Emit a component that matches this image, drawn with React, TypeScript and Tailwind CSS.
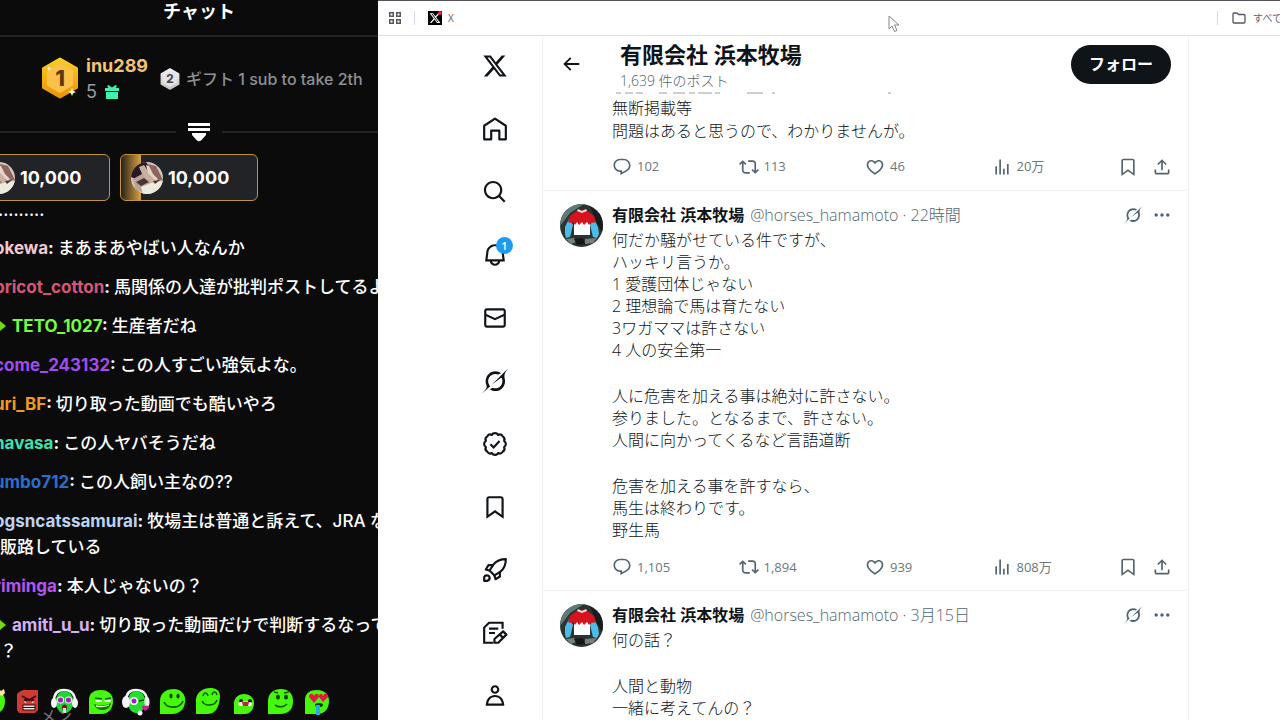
import React from "react";

const PATHS = {
  reply:
    "M1.751 10c0-4.42 3.584-8 8.005-8h4.366c4.49 0 8.129 3.64 8.129 8.13 0 2.96-1.607 5.68-4.196 7.11l-8.054 4.46v-3.69h-.067c-4.49.1-8.183-3.51-8.183-8.01zm8.005-6c-3.317 0-6.005 2.69-6.005 6 0 3.37 2.77 6.08 6.138 6.01l.351-.01h1.761v2.3l5.087-2.81c1.951-1.08 3.163-3.13 3.163-5.36 0-3.39-2.744-6.13-6.129-6.13H9.756z",
  repost:
    "M4.5 3.88l4.432 4.14-1.364 1.46L5.5 7.55V16c0 1.1.896 2 2 2H13v2H7.5c-2.209 0-4-1.79-4-4V7.55L1.432 9.48.068 8.02 4.5 3.88zM16.5 6H11V4h5.5c2.209 0 4 1.79 4 4v8.45l2.068-1.93 1.364 1.46-4.432 4.14-4.432-4.14 1.364-1.46 2.068 1.93V8c0-1.1-.896-2-2-2z",
  like: "M16.697 5.5c-1.222-.06-2.679.51-3.89 2.16l-.805 1.09-.806-1.09C9.984 6.01 8.526 5.44 7.304 5.5c-1.243.07-2.349.78-2.91 1.91-.552 1.12-.633 2.78.479 4.82 1.074 1.97 3.257 4.27 7.129 6.61 3.87-2.34 6.052-4.64 7.126-6.61 1.111-2.04 1.03-3.7.477-4.82-.561-1.13-1.666-1.84-2.908-1.91zm4.187 7.69c-1.351 2.48-4.001 5.12-8.379 7.67l-.503.3-.504-.3c-4.379-2.55-7.029-5.19-8.382-7.67-1.36-2.5-1.41-4.86-.514-6.67.887-1.79 2.647-2.91 4.601-3.01 1.651-.09 3.368.56 4.798 2.01 1.429-1.45 3.146-2.1 4.796-2.01 1.954.1 3.714 1.22 4.601 3.01.896 1.81.846 4.17-.514 6.67z",
  views: "M8.75 21V3h2v18h-2zM18 21V8.5h2V21h-2zM4 21l.004-10h2L6 21H4zm9.248 0v-7h2v7h-2z",
  bookmark:
    "M4 4.5C4 3.12 5.119 2 6.5 2h11C18.881 2 20 3.12 20 4.5v18.44l-8-5.71-8 5.71V4.5zM6.5 4c-.276 0-.5.22-.5.5v14.56l6-4.29 6 4.29V4.5c0-.28-.224-.5-.5-.5h-11z",
  share:
    "M12 2.59l5.7 5.7-1.41 1.42L13 6.41V16h-2V6.41l-3.3 3.3-1.41-1.42L12 2.59zM21 15l-.02 3.51c0 1.38-1.12 2.49-2.5 2.49H5.5C4.11 21 3 19.88 3 18.5V15h2v3.5c0 .28.22.5.5.5h12.98c.28 0 .5-.22.5-.5L19 15h2z",
  more: "M3 12c0-1.1.9-2 2-2s2 .9 2 2-.9 2-2 2-2-.9-2-2zm9 2c1.1 0 2-.9 2-2s-.9-2-2-2-2 .9-2 2 .9 2 2 2zm7 0c1.1 0 2-.9 2-2s-.9-2-2-2-2 .9-2 2 .9 2 2 2z",
  back: "M7.414 13l5.043 5.04-1.414 1.42L3.586 12l7.457-7.46 1.414 1.42L7.414 11H21v2H7.414z",
  x: "M18.244 2.25h3.308l-7.227 8.26 8.502 11.24H16.17l-5.214-6.817L4.99 21.75H1.68l7.73-8.835L1.254 2.25H8.08l4.713 6.231zm-1.161 17.52h1.833L7.084 4.126H5.117z",
  search:
    "M10.25 3.75c-3.59 0-6.5 2.91-6.5 6.5s2.91 6.5 6.5 6.5c1.795 0 3.419-.726 4.596-1.904 1.178-1.177 1.904-2.801 1.904-4.596 0-3.59-2.91-6.5-6.5-6.5zm-8.5 6.5c0-4.694 3.806-8.5 8.5-8.5s8.5 3.806 8.5 8.5c0 1.986-.682 3.815-1.824 5.262l4.781 4.781-1.414 1.414-4.781-4.781c-1.447 1.142-3.276 1.824-5.262 1.824-4.694 0-8.5-3.806-8.5-8.5z",
  bell: "M19.993 9.042C19.48 5.017 16.054 2 11.996 2s-7.49 3.021-7.999 7.051L2.866 18H7.1c.463 2.282 2.481 4 4.9 4s4.437-1.718 4.9-4h4.236l-1.143-8.958zM12 20c-1.306 0-2.417-.835-2.829-2h5.658c-.412 1.165-1.523 2-2.829 2zm-6.866-4l.847-6.698C6.364 6.272 8.941 4 11.996 4s5.627 2.268 6.013 5.295L18.864 16H5.134z",
  mail: "M1.998 5.5c0-1.381 1.119-2.5 2.5-2.5h15c1.381 0 2.5 1.119 2.5 2.5v13c0 1.381-1.119 2.5-2.5 2.5h-15c-1.381 0-2.5-1.119-2.5-2.5v-13zm2.5-.5c-.276 0-.5.224-.5.5v2.764l8 3.638 8-3.636V5.5c0-.276-.224-.5-.5-.5h-15zm15.5 5.463l-8 3.636-8-3.638V18.5c0 .276.224.5.5.5h15c.276 0 .5-.224.5-.5v-8.037z",
  person:
    "M5.651 19h12.698c-.337-1.8-1.023-3.21-1.945-4.19C15.318 13.65 13.838 13 12 13s-3.317.65-4.404 1.81c-.922.98-1.608 2.39-1.945 4.19zm.486-5.56C7.627 11.85 9.648 11 12 11s4.373.85 5.863 2.44c1.477 1.58 2.366 3.8 2.632 6.46l.11 1.1H3.395l.11-1.1c.266-2.66 1.155-4.88 2.632-6.46zM12 4c-1.105 0-2 .9-2 2s.895 2 2 2 2-.9 2-2-.895-2-2-2zM8 6c0-2.21 1.791-4 4-4s4 1.79 4 4-1.791 4-4 4-4-1.79-4-4z",
};

function Icon({ name, className }: { name: keyof typeof PATHS; className: string }) {
  return (
    <svg viewBox="0 0 24 24" fill="currentColor" className={className} aria-hidden="true">
      <path d={PATHS[name]} />
    </svg>
  );
}

function LineIcon({ children }: { children: React.ReactNode }) {
  return (
    <svg viewBox="0 0 24 24" fill="none" stroke="currentColor" strokeWidth="2" className="size-[26px]" aria-hidden="true">
      {children}
    </svg>
  );
}

function GrokIcon({ className }: { className: string }) {
  return (
    <svg viewBox="0 0 33 32" fill="currentColor" className={className} aria-hidden="true">
      <path d="M12.745 20.54l10.97-8.19c.539-.4 1.307-.244 1.564.38 1.349 3.288.746 7.241-1.938 9.955-2.683 2.714-6.417 3.31-9.83 1.954l-3.728 1.745c5.347 3.697 11.84 2.782 15.898-1.324 3.219-3.255 4.216-7.692 3.284-11.693l.008.009c-1.351-5.878.332-8.227 3.782-13.031L33 0l-4.54 4.59v-.014L12.743 20.544m-2.263 1.987c-3.837-3.707-3.175-9.446.1-12.755 2.42-2.449 6.388-3.448 9.852-1.979l3.72-1.737c-.67-.49-1.53-1.017-2.515-1.387-4.455-1.854-9.789-.931-13.41 2.728-3.483 3.523-4.579 8.94-2.697 13.561 1.405 3.454-.899 5.898-3.22 8.364C1.49 30.2.666 31.074 0 32l10.478-9.466" />
    </svg>
  );
}

/* ---------- chat panel ---------- */

function HexBadge({ rank }: { rank: 1 | 2 }) {
  const gold = rank === 1;
  return (
    <svg viewBox="0 0 38 42" className={gold ? "h-[42px] w-[38px] shrink-0" : "h-[22px] w-5 shrink-0"} role="img" aria-label={`${rank}`}>
      <defs>
        <linearGradient id={gold ? "hexGold" : "hexSilver"} x1="0" y1="0" x2="0" y2="1">
          <stop offset="0" stopColor={gold ? "#f8ce22" : "#f2f2f2"} />
          <stop offset="1" stopColor={gold ? "#ee9208" : "#c4c4c6"} />
        </linearGradient>
      </defs>
      <path
        d="M19 2 35.500 11.500v19L19 40 2.500 30.500v-19z"
        fill={gold ? "url(#hexGold)" : "url(#hexSilver)"}
        stroke={gold ? "url(#hexGold)" : "url(#hexSilver)"}
        strokeWidth="3"
        strokeLinejoin="round"
      />
      <path d="M19 7 31 14v14L19 35 7 28V14z" fill={gold ? "#fbc14a" : "#e4e4e6"} stroke={gold ? "#fbc14a" : "#e4e4e6"} strokeWidth="2" strokeLinejoin="round" />
      <text x="19" y="29" textAnchor="middle" fontFamily="Inter, sans-serif" fontWeight="800" fontSize="22" fill={gold ? "#5c3a06" : "#4a4a4e"}>
        {rank}
      </text>
      {gold && <path d="M31 31l1.200 2.800L35 35l-2.800 1.200L31 39l-1.200-2.800L27 35l2.800-1.200zM8 9l.8 1.700 1.700.8-1.700.8L8 14l-.8-1.700-1.700-.8 1.700-.8z" fill="#fff3c4" />}
    </svg>
  );
}

function PetAvatar() {
  return (
    <svg viewBox="0 0 32 32" className="size-8 shrink-0 rounded-full" aria-hidden="true">
      <rect width="32" height="32" fill="#cfc8bb" />
      <path d="M0 0h15l6 9-9 3-5 6-7-3z" fill="#2a1922" />
      <path d="M2 17l9-5 12 9-6 9-12-1z" fill="#b9a596" />
      <path d="M8 5l5-2 6 9 7 7-5 3-9-8z" fill="#c9aea2" />
      <path d="M17 2l8 2 7 14-6 1-7-9z" fill="#8e6460" />
      <path d="M15 3l3 1 4 8 5 5-2 2-8-8z" fill="#e5d5c9" />
      <path d="M10 25l10-4 12-2v13H12z" fill="#ecebdc" />
      <path d="M5 20l8-4 5 4-8 4zM22 19l7-1-5 4z" fill="#4b3436" />
    </svg>
  );
}

function GiftCard({ progress }: { progress?: boolean }) {
  return (
    <button
      className={
        progress
          ? "flex h-[47px] w-[138px] shrink-0 items-center gap-[5px] rounded-md border border-[#c0933f] bg-[linear-gradient(to_right,#25221d_0,#d59b3c_19px,#d59b3c_20px,#222327_20px)] pl-2.5 text-[18px] font-bold text-white"
          : "flex h-[47px] w-[138px] shrink-0 items-center gap-[5px] rounded-md border border-[#c0933f] bg-[#222327] pl-2.5 text-[18px] font-bold text-white"
      }
    >
      <PetAvatar />
      10,000
    </button>
  );
}

const MESSAGES: { name: string; color: string; lines: string[]; arrow?: boolean }[] = [
  { name: "okewa", color: "text-[#f6c8cf]", lines: ["まあまあやばい人なんか"] },
  { name: "pricot_cotton", color: "text-[#d65678]", lines: ["馬関係の人達が批判ポストしてるよ"] },
  { name: "TETO_1027", color: "text-[#75fd46]", lines: ["生産者だね"], arrow: true },
  { name: "come_243132", color: "text-[#a04cf2]", lines: ["この人すごい強気よな。"] },
  { name: "uri_BF", color: "text-[#f39a1c]", lines: ["切り取った動画でも酷いやろ"] },
  { name: "navasa", color: "text-[#3ee0ae]", lines: ["この人ヤバそうだね"] },
  { name: "umbo712", color: "text-[#2a6fd0]", lines: ["この人飼い主なの??"] },
  { name: "ogsncatssamurai", color: "text-[#bcd3f2]", lines: ["牧場主は普通と訴えて、JRA な", "販路している"] },
  { name: "riminga", color: "text-[#b255f0]", lines: ["本人じゃないの？"] },
  { name: "amiti_u_u", color: "text-[#d6b0f7]", lines: ["切り取った動画だけで判断するなって", "？"], arrow: true },
];

const GREEN = "#46f80c";
const BLOB = "M3 26V12C3 5 8 2 15 2s12 4 12 11-4 13-12 13z";

function Emote({ children }: { children: React.ReactNode }) {
  return (
    <button className="size-7 shrink-0" aria-label="emote">
      <svg viewBox="0 0 28 28" className="size-7" aria-hidden="true">
        {children}
      </svg>
    </button>
  );
}

function Emotes() {
  return (
    <div className="-ml-[22px] flex gap-2">
      <Emote>
        <path d={BLOB} fill={GREEN} />
        <path d="M19 5l2-4 2 2 3-2 1 4-3 3z" fill="#ffe9a0" />
      </Emote>
      <Emote>
        <path d="M5 4l4-2h15v20l-3 3H5l-2-3V6z" fill="#cf3a32" />
        <path d="M8 8l7 4 7-4M10 12l3 1M17 13l3-1" stroke="#3a0a0a" strokeWidth="2" fill="none" />
        <path d="M10 13l3 1-2 1zM20 13l-3 1 2 1z" fill="#fff" />
        <rect x="9" y="17" width="12" height="5" fill="#e8e8e8" stroke="#3a0a0a" />
        <path d="M9 19.500h12" stroke="#3a0a0a" />
      </Emote>
      <Emote>
        <path d="M4 13C4 5 8 2 14 2s11 3 11 11" stroke="#f4f6f4" strokeWidth="2.500" fill="none" />
        <ellipse cx="14.500" cy="14" rx="9" ry="11" fill="#1fd52f" />
        <ellipse cx="4" cy="15" rx="3" ry="5" fill="#f6f6f6" />
        <ellipse cx="25" cy="15" rx="3" ry="5" fill="#f6f6f6" />
        <circle cx="10.500" cy="12" r="3.500" fill="#fff" />
        <circle cx="18.500" cy="12" r="3.500" fill="#fff" />
        <circle cx="10.500" cy="12" r="2.600" fill="#9b1fc0" />
        <circle cx="18.500" cy="12" r="2.600" fill="#9b1fc0" />
        <ellipse cx="14.500" cy="19.500" rx="2.500" ry="3" fill="#7a1232" />
        <path d="M13 20h3v5h-3z" fill="#e5dce0" />
      </Emote>
      <Emote>
        <path d={BLOB} fill={GREEN} />
        <path d="M9 10l7 1M19 11l6-1" stroke="#0e6a00" strokeWidth="1.500" />
        <path d="M9 12h7v2h-6zM18 12h7l-1 2h-5z" fill="#e8ffe0" />
        <path d="M8 16c5 2 12 2 17-1-1 5-4 7-8 7s-8-2-9-6z" fill="#0e7a00" />
        <path d="M10 18c4 1 9 1 13-1" stroke="#d6ffc8" strokeWidth="1.300" fill="none" />
      </Emote>
      <Emote>
        <path d="M4 13C4 5 8 2 14 2s11 3 11 11" stroke="#f4f6f4" strokeWidth="2.500" fill="none" />
        <ellipse cx="14.500" cy="14" rx="9" ry="11" fill="#22e02a" />
        <ellipse cx="4" cy="14" rx="4" ry="6" fill="#f6f6f6" />
        <ellipse cx="25" cy="14" rx="2.500" ry="5" fill="#f6f6f6" />
        <circle cx="12" cy="13" r="4" fill="#fff" />
        <circle cx="12" cy="13" r="2.500" fill="#9b1fc0" />
        <path d="M17 13l5-1" stroke="#084a08" strokeWidth="1.500" />
        <path d="M23 23l-3-3c0-3 2-3 3-1 1-2 4-2 4 1z" fill="#d81aa0" />
        <circle cx="18" cy="25" r="2.500" fill="#f6f6f6" />
      </Emote>
      <Emote>
        <path d="M2 26V13C2 5 8 1 16 1c6 0 10 4 11 9 1 9-4 16-13 16z" fill={GREEN} />
        <ellipse cx="13" cy="8" rx="1.600" ry="2.600" fill="#06400a" />
        <ellipse cx="20" cy="8" rx="1.600" ry="2.600" fill="#06400a" />
        <path d="M6 14c3 7 16 7 19-1" stroke="#0b5a08" strokeWidth="1.600" fill="none" />
      </Emote>
      <Emote>
        <path d="M2 26V11C3 4 9 0 16 0c6 0 10 2 10 9-1 11-5 17-13 17z" fill={GREEN} />
        <path d="M9 8c1-4 4-4 5 0M18 7c1-4 4-4 5 0M8 13c3 6 13 5 15-1" stroke="#0b5a08" strokeWidth="1.500" fill="none" />
      </Emote>
      <Emote>
        <path d="M4 26V14c1-5 5-8 10-8 6 0 10 4 10 9s-3 11-9 11z" fill={GREEN} />
        <circle cx="11" cy="13" r="2" fill="#111" />
        <circle cx="20" cy="13" r="2" fill="#111" />
        <path d="M8 15c4-2 10-2 14 0 0 3-2 4-3 3h-8c-2 0-3-1-3-3z" fill="#f4efe8" />
        <path d="M12 14h7l-1 4h-5z" fill="#b8263a" />
      </Emote>
      <Emote>
        <path d="M2 26V13C2 5 8 1 15 1s12 4 12 12-4 13-13 13z" fill={GREEN} />
        <path d="M8 4l4 1M18 5l5-1" stroke="#0b5a08" strokeWidth="1.500" />
        <ellipse cx="12" cy="9" rx="2" ry="2.600" fill="#06400a" />
        <ellipse cx="20" cy="9" rx="2" ry="2.600" fill="#06400a" />
        <path d="M9 17c4 3 9 2 12-1" stroke="#0b5a08" strokeWidth="1.600" fill="none" />
      </Emote>
      <Emote>
        <path d={BLOB} fill={GREEN} />
        <path d="M12 15L7 9c0-4 4-4 5-1 1-3 5-3 5 1zM21 14l-4-5c0-4 3-4 4-1 1-3 5-3 5 1z" fill="#e8163c" />
        <ellipse cx="17" cy="17" rx="4" ry="2" fill="#0a3c0a" />
        <path d="M14 17h4v10h-4z" fill="#28a8e8" />
      </Emote>
    </div>
  );
}

function ChatPanel() {
  return (
    <aside className="relative flex w-[378px] shrink-0 flex-col overflow-hidden bg-[#0b0b0c] font-['Inter','Noto_Sans_CJK_JP',sans-serif] text-white">
      <h2 className="flex h-[37px] shrink-0 items-start justify-center border-b-2 border-[#242426] pl-5 text-[18px] leading-6 font-bold">チャット</h2>

      <div className="flex h-[82px] shrink-0 items-center pl-[41px]">
        <HexBadge rank={1} />
        <div className="ml-[7px] pt-0.5 leading-[26px]">
          <div className="text-[18px] font-bold text-[#f5c373]">inu289</div>
          <div className="flex items-center gap-2 text-[18px] text-[#9a9ca2]">
            5
            <svg viewBox="0 0 14 14" className="size-3.5" fill="#3ef2b4" aria-hidden="true">
              <path d="M0 3h3.500L2 1l1.500-1L7 2.500 10.500 0 12 1l-1.500 2H14v3H0zM1 7h12v7H1z" />
            </svg>
          </div>
        </div>
        <div className="ml-3 flex items-center gap-1.5 pt-0.5 text-[16px] font-medium whitespace-nowrap text-[#8d9096]">
          <HexBadge rank={2} />
          ギフト 1 sub to take 2th
        </div>
      </div>

      <div className="mb-[9px] flex h-[26px] shrink-0 items-center gap-3">
        <span className="h-0.5 flex-1 bg-[#242426]" />
        <button aria-label="expand" className="text-white">
          <svg viewBox="0 0 22 20" className="h-5 w-[22px]" fill="currentColor" aria-hidden="true">
            <path d="M0 1h22v3H0zM0 6h22v3H0zM4 11h14v2l-5 5.500q-2 1.500-4 0L4 13z" />
          </svg>
        </button>
        <span className="h-0.5 w-[156px] bg-[#242426]" />
      </div>

      <div className="-ml-7 flex shrink-0 gap-2.5">
        <GiftCard />
        <GiftCard progress />
      </div>

      <div className="-ml-1.5 flex shrink-0 flex-col gap-[13px] text-[17px] leading-[26px] font-medium whitespace-nowrap">
        <p className="h-[21px] pl-1 leading-[18px]">.........</p>
        {MESSAGES.map((m) => (
          <div key={m.name} className={m.arrow ? "flex items-start gap-1 pl-1.5" : "flex items-start"}>
            {m.arrow && (
              <svg viewBox="0 0 8 26" className="h-[26px] w-2 shrink-0" fill="#6fdc14" aria-hidden="true">
                <path d="M0 8l6 5-6 5z" />
              </svg>
            )}
            <div className={m.arrow ? "" : "w-0 min-w-full"}>
              <p>
                <span className={m.color + " font-bold"}>{m.name}</span>
                <span className="font-bold">: </span>
                {m.lines[0]}
              </p>
              {m.lines[1] && <p className={m.arrow ? "-ml-3" : "pl-1.5"}>{m.lines[1]}</p>}
            </div>
          </div>
        ))}
      </div>

      <div className="mt-6 shrink-0">
        <Emotes />
      </div>
      <span className="absolute bottom-0 left-10 h-3.5 overflow-hidden text-base leading-5 text-[#77797f]">メン</span>
    </aside>
  );
}

/* ---------- browser ---------- */

function BookmarksBar() {
  return (
    <header className="flex h-9 shrink-0 items-center border-t border-b border-t-[#55535a] border-b-[#dcdddf] bg-white pl-2.5 text-[10px] text-[#5f6368]">
      <button aria-label="Tab groups">
        <svg viewBox="0 0 14 14" className="size-3.5" fill="none" stroke="#55585c" strokeWidth="1.500" aria-hidden="true">
          <path d="M1.750 1.750h3.500v3.500h-3.500zM8.750 1.750h3.500v3.500h-3.500zM1.750 8.750h3.500v3.500h-3.500zM8.750 8.750h3.500v3.500h-3.500z" />
        </svg>
      </button>
      <span className="ml-3 h-3.5 w-px bg-[#d3dbee]" />
      <a href="#x" className="ml-[13px] flex items-center gap-1.5">
        <span className="relative flex size-3.5 items-center justify-center bg-black text-white">
          <Icon name="x" className="size-3" />
          <span className="absolute top-0 right-0 size-1 rounded-full bg-[#f0204e]" />
        </span>
        X
      </a>
      <span className="ml-auto h-3.5 w-px bg-[#d3dbee]" />
      <button className="-mr-3 ml-3.5 flex shrink-0 items-center gap-[7px] whitespace-nowrap">
        <svg viewBox="0 0 14 12" className="h-3 w-3.5" fill="none" stroke="#55585c" strokeWidth="1.300" aria-hidden="true">
          <path d="M1 2q0-1 1-1h3l1.500 1.500H12q1 0 1 1V10q0 1-1 1H2q-1 0-1-1z" />
        </svg>
        すべての
      </button>
    </header>
  );
}

function NavRail() {
  const items: [string, React.ReactNode][] = [
    ["X", <Icon name="x" className="size-7" />],
    [
      "ホーム",
      <LineIcon>
        <path d="M2 21V8.500L12 2l10 6.500V21h-6v-8H8.500v8z" transform="translate(0 .5)" strokeLinejoin="round" />
      </LineIcon>,
    ],
    ["検索", <Icon name="search" className="size-[26px]" />],
    [
      "通知",
      <span className="relative block">
        <Icon name="bell" className="size-[26px]" />
        <span className="absolute -top-[5px] -right-[5px] flex size-[17px] items-center justify-center rounded-full bg-[#1d9bf0] text-[11px] leading-none font-semibold text-white">1</span>
      </span>,
    ],
    ["メッセージ", <Icon name="mail" className="size-[26px]" />],
    ["Grok", <GrokIcon className="size-[26px]" />],
    [
      "認証",
      <LineIcon>
        <path
          d="M12 2a3.300 3.300 0 0 1 2.900 1.600 3.300 3.300 0 0 1 4.200 1.300 3.300 3.300 0 0 1 1.300 4.200A3.300 3.300 0 0 1 22 12a3.300 3.300 0 0 1-1.600 2.900 3.300 3.300 0 0 1-1.300 4.200 3.300 3.300 0 0 1-4.200 1.300A3.300 3.300 0 0 1 12 22a3.300 3.300 0 0 1-2.900-1.600 3.300 3.300 0 0 1-4.200-1.300 3.300 3.300 0 0 1-1.300-4.200A3.300 3.300 0 0 1 2 12a3.300 3.300 0 0 1 1.600-2.900 3.300 3.300 0 0 1 1.300-4.200 3.300 3.300 0 0 1 4.200-1.300A3.300 3.300 0 0 1 12 2z"
          strokeLinejoin="round"
        />
        <path d="M7.800 12.300l2.900 2.900 5.500-6" />
      </LineIcon>,
    ],
    ["ブックマーク", <Icon name="bookmark" className="size-[26px]" />],
    [
      "ブースト",
      <LineIcon>
        <path d="M22 2c-5 0-9 2-11.500 5L7 12.500 11.500 17l5.500-3.500C20 11 22 7 22 2z" strokeLinejoin="round" />
        <path d="M10.500 7.500H6l-2.500 4L7 12.500M16.500 13.500V18l-4 2.500-1-3.500M2 22v-3.500Q2.500 17 4.500 17T7 19t-2 3z" strokeLinejoin="round" />
      </LineIcon>,
    ],
    [
      "記事",
      <LineIcon>
        <path d="M10.500 21H2V7l4.500-4.500H19V8M6.500 8H15M6.500 12H12" />
        <path d="M19.500 10.500L22.500 13.500 15 21h-3.500v-3.500zM16.500 13.500l3 3" strokeLinejoin="round" />
      </LineIcon>,
    ],
    ["プロフィール", <Icon name="person" className="size-[26px]" />],
  ];
  return (
    <nav className="-mt-0.5 flex w-[164px] shrink-0 flex-col items-end pr-[34px] text-[#0f1419]">
      {items.map(([label, icon]) => (
        <a key={label} href="#nav" aria-label={label} className="flex h-[63px] w-[26px] shrink-0 items-center justify-center">
          {icon}
        </a>
      ))}
    </nav>
  );
}

function FarmAvatar() {
  return (
    <svg viewBox="0 0 43 43" className="size-[43px] shrink-0 rounded-full" aria-hidden="true">
      <rect width="43" height="43" fill="#2b3433" />
      <path d="M0 0h24L10 9 0 22z" fill="#5f7b78" />
      <path d="M30 2l13 10v18l-6-10z" fill="#191c1d" />
      <path d="M9 15L5 23v7l1 4 4-1 3-12zM34 15l4 8 1 7-2 4-4-1-3-12z" fill="#4cbce8" />
      <path d="M14 17h16v14H14z" fill="#fff" />
      <path d="M10 12l8-6h8l8 6 2 6-3 1-2-1-2 3-2-3-3 3-2-3-3 3-2-3-2 3-2-3-2 1-3-1z" fill="#d8121f" />
      <path d="M18 5l4 2 4-2 1 2-5 2-5-2z" fill="#f0dada" />
      <path d="M6 35l8-1 2 4-5 2zM25 35l12-1-4 5-8 1z" fill="#77807e" />
      <path d="M14 35l9-1 2 6-8 1z" fill="#151818" />
    </svg>
  );
}

function Actions({ counts }: { counts: [string, string, string, string] }) {
  const kinds = ["reply", "repost", "like", "views"] as const;
  return (
    <div className="flex h-5 items-center text-[13px] text-[#6b7780]">
      {kinds.map((k, i) => (
        <button key={k} aria-label={k} className="flex flex-1 items-center gap-[5px]">
          <Icon name={k} className="size-5 text-[#536471]" />
          {counts[i]}
        </button>
      ))}
      <div className="flex gap-3.5 text-[#536471]">
        <button aria-label="bookmark">
          <Icon name="bookmark" className="size-5" />
        </button>
        <button aria-label="share">
          <Icon name="share" className="size-5" />
        </button>
      </div>
    </div>
  );
}

function Post({ time, paragraphs, counts }: { time: string; paragraphs: string[][]; counts?: [string, string, string, string] }) {
  return (
    <article className="flex gap-[9px] border-b border-[#eff3f4] pt-[13px] pr-4 pb-[13px] pl-[17px]">
      <FarmAvatar />
      <div className="min-w-0 flex-1 text-base leading-[22px]">
        <div className="flex items-center text-[#536471]">
          <a href="#profile" className="font-bold text-[#0f1419]">
            有限会社 浜本牧場
          </a>
          <span className="ml-1.5 font-light">@horses_hamamoto · {time}</span>
          <button aria-label="Grok" className="ml-auto">
            <GrokIcon className="size-[18px]" />
          </button>
          <button aria-label="more" className="ml-2.5">
            <Icon name="more" className="size-5" />
          </button>
        </div>
        <div className="mt-[3px] mb-4 flex flex-col gap-6 font-light text-[#0f1419]">
          {paragraphs.map((p, i) => (
            <div key={i}>
              {p.map((line) => (
                <p key={line}>{line}</p>
              ))}
            </div>
          ))}
        </div>
        {counts && <Actions counts={counts} />}
      </div>
    </article>
  );
}

function Timeline() {
  return (
    <main className="w-[647px] shrink overflow-hidden border-x border-[#eff3f4]">
      <div className="flex h-14 items-center pr-[17px] pl-[17px]">
        <button aria-label="戻る" className="text-[#0f1419]">
          <Icon name="back" className="size-[22px]" />
        </button>
        <div className="ml-[38px] pt-1">
          <h1 className="text-[22px] leading-[30px] font-bold text-[#0f1419]">有限会社 浜本牧場</h1>
          <p className="text-[14px] leading-6 font-light text-[#536471]">1,639 件のポスト</p>
        </div>
        <button className="ml-auto h-[39px] rounded-full bg-[#0f1419] px-[18px] text-base font-bold text-white">フォロー</button>
      </div>

      <article className="border-b border-[#eff3f4] pr-4 pb-[13px] pl-[69px]">
        <svg viewBox="0 0 290 3" className="block h-[3px] w-[290px]" aria-hidden="true">
          <path d="M4 1h5m4 0h8m3 0h7m16 0h8m6 0h12m4 0h6m3 0h14m3 0h5m27 0h16m9 0h3m113 0h3" stroke="#9a9fa2" />
        </svg>
        <div className="mt-0.5 mb-3.5 text-base leading-[23px] font-light text-[#0f1419]">
          <p>無断掲載等</p>
          <p>問題はあると思うので、わかりませんが。</p>
        </div>
        <Actions counts={["102", "113", "46", "20万"]} />
      </article>

      <Post
        time="22時間"
        paragraphs={[
          ["何だか騒がせている件ですが、", "ハッキリ言うか。", "1 愛護団体じゃない", "2 理想論で馬は育たない", "3ワガママは許さない", "4 人の安全第一"],
          ["人に危害を加える事は絶対に許さない。", "参りました。となるまで、許さない。", "人間に向かってくるなど言語道断"],
          ["危害を加える事を許すなら、", "馬生は終わりです。", "野生馬"],
        ]}
        counts={["1,105", "1,894", "939", "808万"]}
      />
      <Post time="3月15日" paragraphs={[["何の話？"], ["人間と動物", "一緒に考えてんの？"]]} />
    </main>
  );
}

export default function App() {
  return (
    <div className="flex h-screen overflow-hidden bg-white">
      <ChatPanel />
      <div className="relative flex min-w-0 flex-1 flex-col overflow-hidden bg-white font-['Open_Sans','Noto_Sans_CJK_JP',sans-serif]">
        <BookmarksBar />
        <div className="flex min-h-0 flex-1">
          <NavRail />
          <Timeline />
        </div>
        <svg viewBox="0 0 12 18" className="absolute top-[15px] left-[510px] h-[18px] w-3" aria-hidden="true">
          <path d="M1 1v13l3-3 2.500 5.500 2.500-1L6.500 10H11z" fill="#fff" stroke="#85878a" strokeLinejoin="round" />
        </svg>
      </div>
    </div>
  );
}
